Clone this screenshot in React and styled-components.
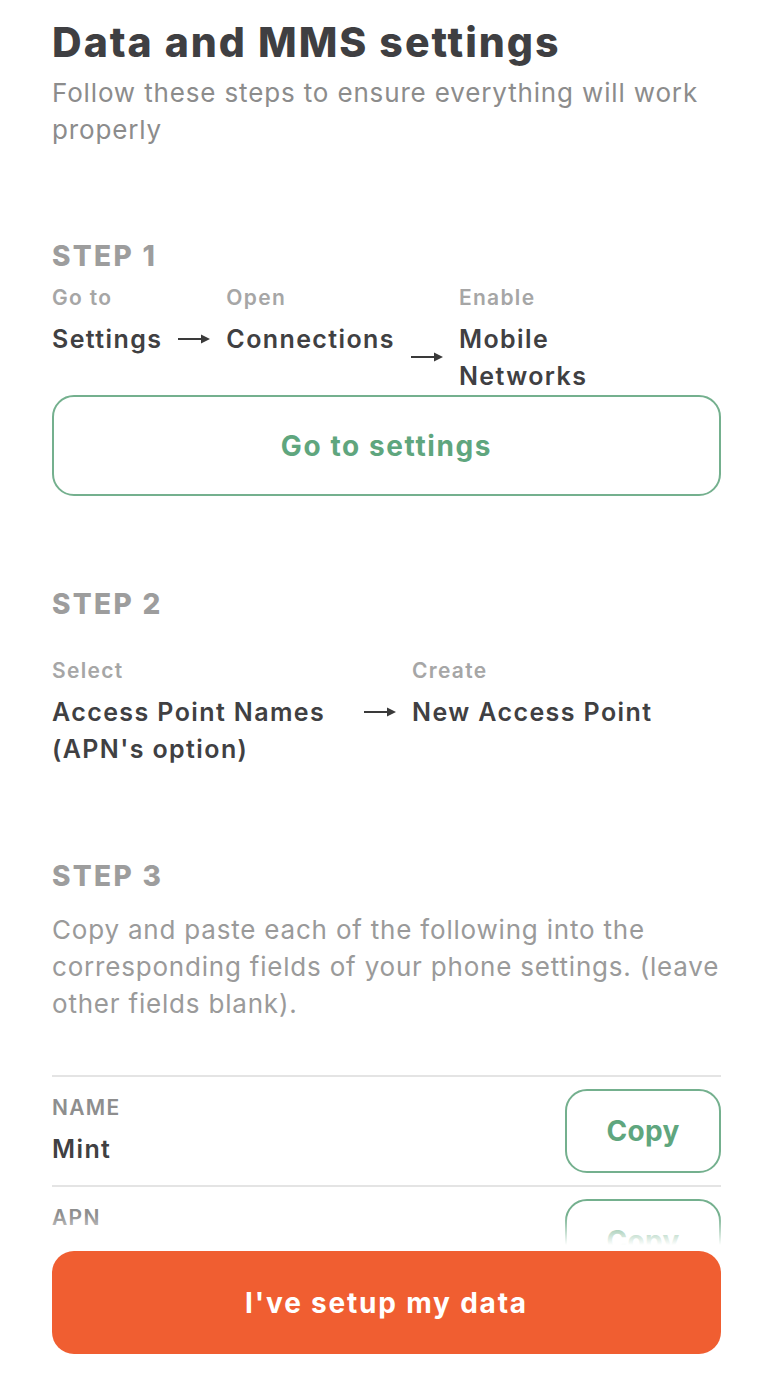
import React from 'react'
import styled, { createGlobalStyle } from 'styled-components'

const GlobalStyle = createGlobalStyle`
body {
  margin: 0;
  background: #fff;
  font-family: Inter, Lato, sans-serif;
}
`

const Page = styled.div`
height: 1374px;
display: flex;
flex-direction: column;
background: #fff;
`
const Scroll = styled.div`
flex: 1;
position: relative;
overflow: hidden;
padding: 17px 52px 0;
`
const Fade = styled.div`
position: absolute;
left: 0;
right: 0;
bottom: 0;
height: 30px;
background: linear-gradient(to bottom, rgba(255,255,255,0), #fff);
`
const Title = styled.h1`
margin: 0;
font-size: 41px;
line-height: 50px;
font-weight: 800;
color: #3f3f42;
letter-spacing: 2px;
`
const Subtitle = styled.p`
margin: 7px 0 0;
font-size: 26px;
line-height: 37px;
color: #8c8c8c;
letter-spacing: 0.85px;
`
const Step = styled.section`
margin-top: ${p => p.$top || 90}px;
`
const StepHeading = styled.h2`
margin: 0;
font-size: 28px;
line-height: 36px;
font-weight: 800;
color: #9d9d9d;
letter-spacing: 2.3px;
`
const Flow = styled.div`
display: flex;
align-items: flex-start;
gap: 16px;
margin-top: ${p => p.$top || 11}px;
`
const FlowItem = styled.div`
display: flex;
flex-direction: column;
gap: 10px;
width: ${p => (p.$width ? `${p.$width}px` : 'auto')};
flex-shrink: 0;
`
const Label = styled.div`
font-size: 21px;
line-height: 26px;
font-weight: 600;
color: #a6a6a6;
letter-spacing: 1.3px;
`
const Value = styled.div`
font-size: 25px;
line-height: 37px;
font-weight: 600;
color: #404042;
letter-spacing: 1.4px;
`
const ArrowBox = styled.div`
display: flex;
padding-top: ${p => 48 + (p.$drop || 0)}px;
color: #3a3a3a;
`
const OutlineButton = styled.button`
display: flex;
align-items: center;
justify-content: center;
width: 100%;
height: 101px;
border: 2px solid #74b08e;
border-radius: 22px;
background: #fff;
color: #5fa67e;
font-family: inherit;
font-size: 28px;
font-weight: 700;
letter-spacing: ${p => p.$spacing ?? 1.6}px;
cursor: pointer;
`
const CopyButton = styled(OutlineButton)`
width: 156px;
height: 84px;
flex-shrink: 0;
`
const Para = styled.p`
margin: 17px 0 0;
font-size: 26px;
line-height: 37px;
color: #9a9a9a;
letter-spacing: 0.8px;
`
const Fields = styled.div`
margin-top: 53px;
`
const FieldRow = styled.div`
display: flex;
align-items: center;
justify-content: space-between;
padding: 12px 0;
border-top: 2px solid #e4e4e4;
`
const FieldText = styled.div`
display: flex;
flex-direction: column;
gap: 10px;
`
const FieldLabel = styled(Label)`
color: #8e8e8e;
`
const Footer = styled.div`
padding: 6px 52px 20px;
`
const PrimaryButton = styled.button`
width: 100%;
height: 103px;
border: none;
border-radius: 22px;
background: #f05e31;
color: #fff;
font-family: inherit;
font-size: 28px;
font-weight: 700;
letter-spacing: 1.8px;
cursor: pointer;
`

function Arrow({ drop }) {
  return (
    <ArrowBox $drop={drop}>
      <svg width="32" height="12" viewBox="0 0 32 12">
        <line x1="0" y1="6" x2="26" y2="6" stroke="currentColor" strokeWidth="2" />
        <polygon points="23,1.5 32,6 23,10.5" fill="currentColor" />
      </svg>
    </ArrowBox>
  )
}

const fields = [
  { label: 'NAME', value: 'Mint' },
  { label: 'APN', value: 'Wholesale' },
  { label: 'MMSC', value: 'http://wholesale.mmsmvno.com/mms/wapenc' },
]

export default function App() {
  return (
    <Page>
      <GlobalStyle />
      <Scroll>
        <Title>Data and MMS settings</Title>
        <Subtitle>Follow these steps to ensure everything will work properly</Subtitle>

        <Step $top={90}>
          <StepHeading>STEP 1</StepHeading>
          <Flow>
            <FlowItem>
              <Label>Go to</Label>
              <Value>Settings</Value>
            </FlowItem>
            <Arrow />
            <FlowItem>
              <Label>Open</Label>
              <Value>Connections</Value>
            </FlowItem>
            <Arrow drop={18} />
            <FlowItem $width={150}>
              <Label>Enable</Label>
              <Value>Mobile Networks</Value>
            </FlowItem>
          </Flow>
          <OutlineButton>Go to settings</OutlineButton>
        </Step>

        <Step $top={90}>
          <StepHeading>STEP 2</StepHeading>
          <Flow $top={36}>
            <FlowItem $width={296}>
              <Label>Select</Label>
              <Value>Access Point Names (APN's option)</Value>
            </FlowItem>
            <Arrow />
            <FlowItem>
              <Label>Create</Label>
              <Value>New Access Point</Value>
            </FlowItem>
          </Flow>
        </Step>

        <Step $top={90}>
          <StepHeading>STEP 3</StepHeading>
          <Para>
            Copy and paste each of the following into the corresponding fields of your phone settings. (leave other fields blank).
          </Para>
          <Fields>
            {fields.map(f => (
              <FieldRow key={f.label}>
                <FieldText>
                  <FieldLabel>{f.label}</FieldLabel>
                  <Value>{f.value}</Value>
                </FieldText>
                <CopyButton $spacing={0.3}>Copy</CopyButton>
              </FieldRow>
            ))}
          </Fields>
        </Step>
        <Fade />
      </Scroll>
      <Footer>
        <PrimaryButton>I've setup my data</PrimaryButton>
      </Footer>
    </Page>
  )
}
